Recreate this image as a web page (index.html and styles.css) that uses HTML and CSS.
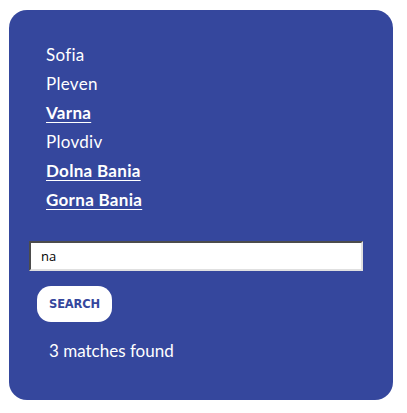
FILE: index.html
```html
<!DOCTYPE html>
<html>
<head>
<meta charset="utf-8">
<link rel="stylesheet" href="styles.css">
</head>
<body>
<div class="card">
  <ul class="towns">
    <li>Sofia</li>
    <li>Pleven</li>
    <li class="match">Varna</li>
    <li>Plovdiv</li>
    <li class="match">Dolna Bania</li>
    <li class="match">Gorna Bania</li>
  </ul>
  <input class="search-input" type="text" value="na">
  <button class="search-btn">SEARCH</button>
  <div class="result">3 matches found</div>
</div>
</body>
</html>
```

FILE: styles.css
```css
html, body {
  margin: 0;
  padding: 0;
  background: #ffffff;
}
body {
  padding: 10px 0 0 9px;
}
.card {
  width: 384px;
  height: 390px;
  box-sizing: border-box;
  background: #35479d;
  border-radius: 18px;
  padding: 30px 20px 0 20px;
  display: flex;
  flex-direction: column;
  align-items: flex-start;
  font-family: Lato, "Open Sans", sans-serif;
  color: #ffffff;
}
.towns {
  list-style: none;
  margin: 0;
  padding: 0 0 0 17px;
}
.towns li {
  font-size: 17px;
  letter-spacing: 0.3px;
  line-height: 29px;
  height: 29px;
}
.towns li.match {
  font-weight: bold;
  text-decoration: underline;
  text-underline-offset: 3px;
}
.search-input {
  margin-top: 27px;
  width: 334px;
  height: 30px;
  box-sizing: border-box;
  border: 2px inset #a0a0a0;
  border-right-color: #e0e0e0;
  border-bottom-color: #e0e0e0;
  padding: 0 10px;
  font-family: "Open Sans", sans-serif;
  font-size: 13px;
  color: #000;
  background: #fff;
  outline: none;
}
.search-btn {
  margin: 15px 0 0 8px;
  width: 75px;
  height: 36px;
  border: none;
  border-radius: 14px;
  background: #ffffff;
  color: #35479d;
  font-family: "DejaVu Sans", Verdana, sans-serif;
  font-weight: bold;
  font-size: 11.5px;
  letter-spacing: -0.2px;
  padding: 0;
}
.result {
  margin: 14px 0 0 20px;
  font-size: 17px;
  line-height: 29px;
}
```
